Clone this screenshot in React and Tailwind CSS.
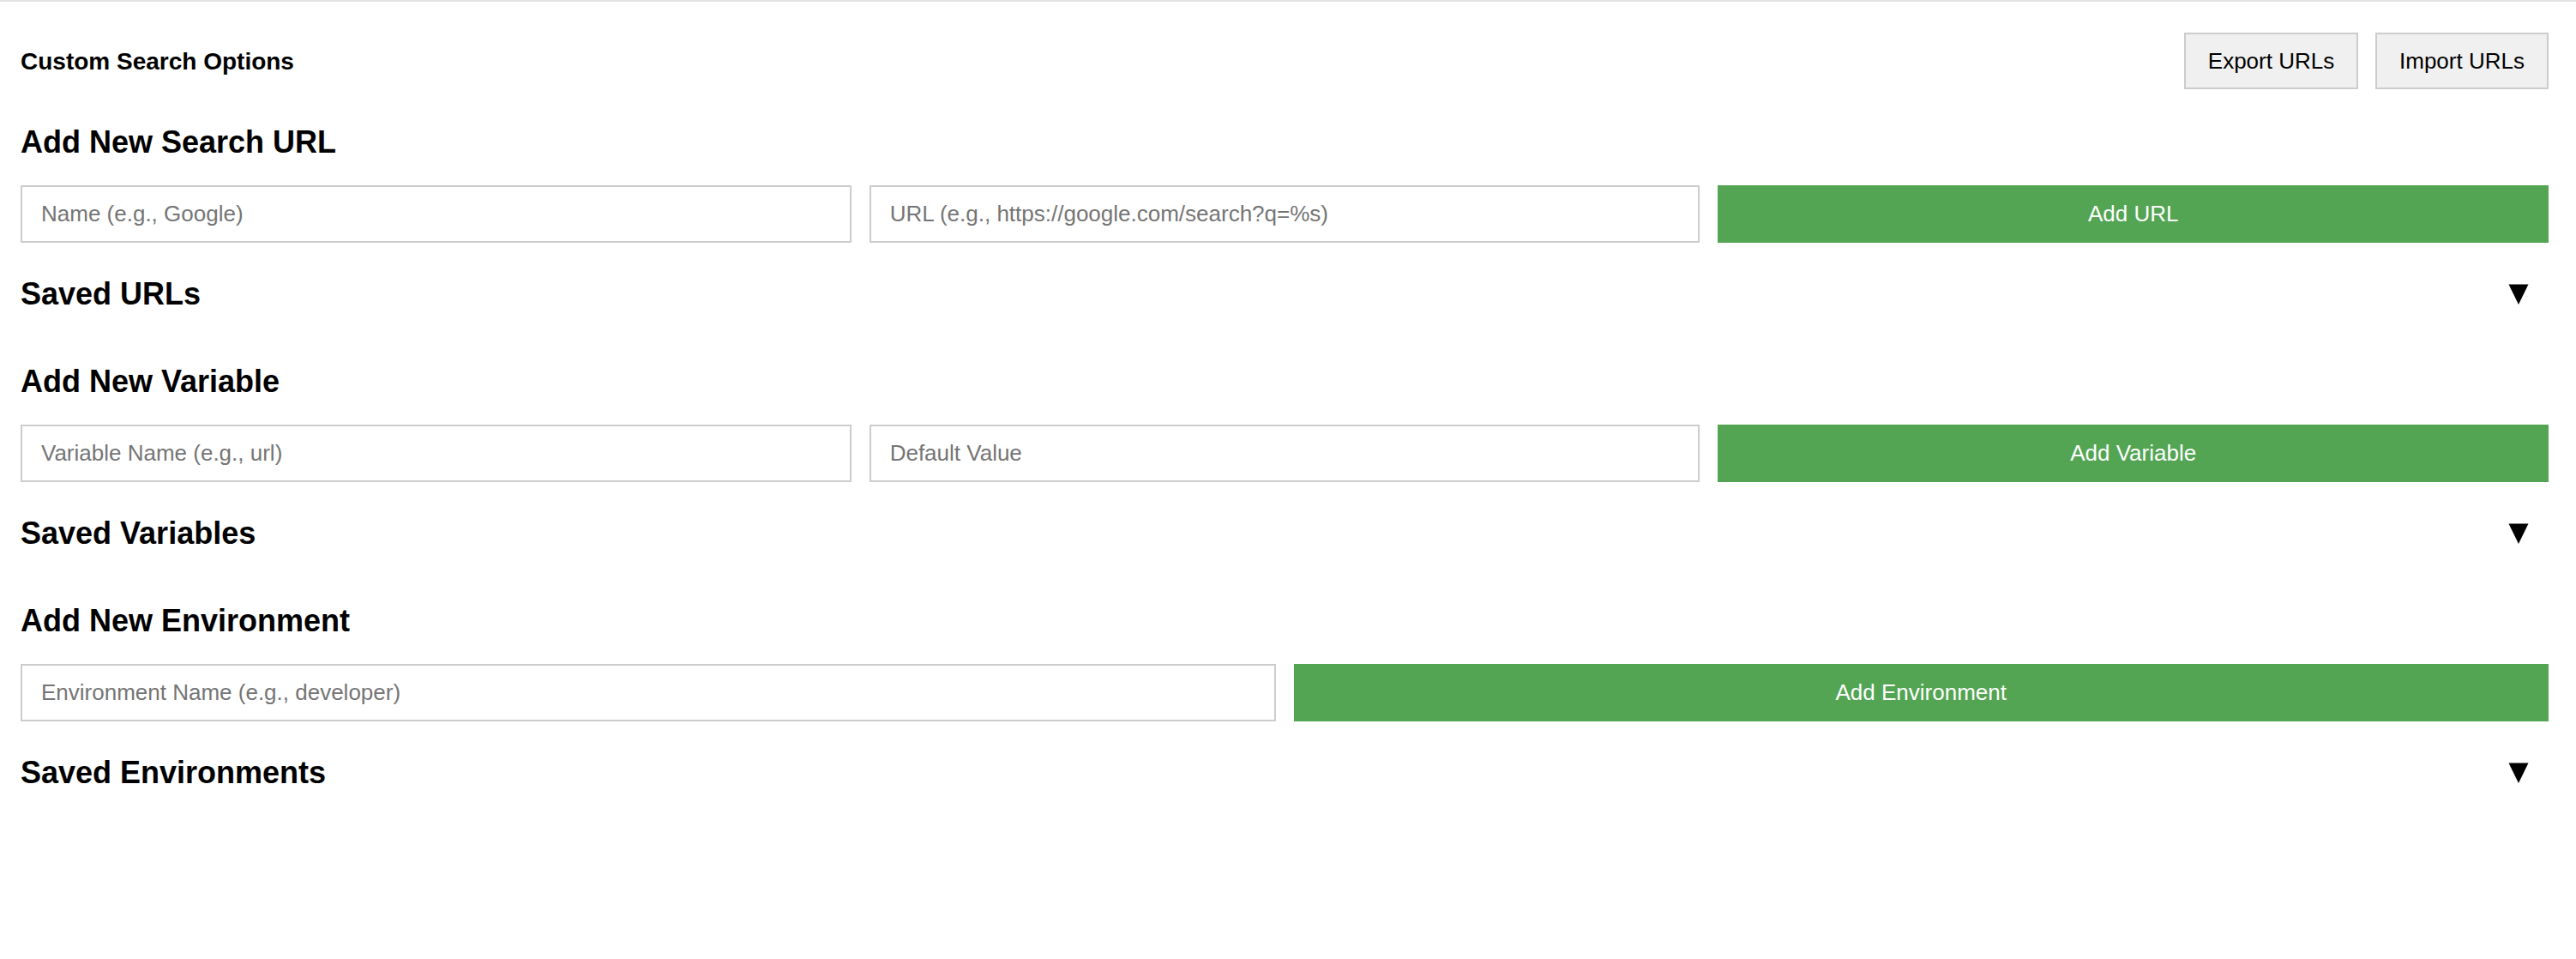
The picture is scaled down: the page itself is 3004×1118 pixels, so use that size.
function Triangle() {
  return (
    <svg width="24" height="24" viewBox="0 0 24 24" className="mr-[23px] shrink-0" aria-hidden="true">
      <polygon points="0.5,0.5 23.5,0.5 12,24" fill="#000000" />
    </svg>
  );
}

function Section({ title, savedTitle, inputs, buttonLabel, first }) {
  return (
    <section>
      <h2
        className={
          first
            ? "mt-[42px] text-[36px] font-bold leading-[40px]"
            : "mt-[62px] text-[36px] font-bold leading-[40px]"
        }
      >
        {title}
      </h2>
      <div
        className={
          inputs.length === 2
            ? "mt-[30px] grid grid-cols-3 gap-[21px]"
            : "mt-[30px] grid grid-cols-2 gap-[21px]"
        }
      >
        {inputs.map((p) => (
          <input
            key={p}
            type="text"
            placeholder={p}
            className="h-[67px] w-full min-w-0 border-2 border-[#cccccc] bg-white px-[22px] text-[26px] text-black outline-none placeholder:text-[#757575]"
          />
        ))}
        <button
          type="button"
          className="h-[67px] w-full min-w-0 bg-[#53a553] text-[26px] text-white"
        >
          {buttonLabel}
        </button>
      </div>
      <div className="mt-[40px] flex items-center justify-between">
        <h2 className="text-[36px] font-bold leading-[40px]">{savedTitle}</h2>
        <Triangle />
      </div>
    </section>
  );
}

export default function App() {
  return (
    <div className="min-h-screen border-t-2 border-[#e3e3e3] bg-white pl-[24px] pr-[32px] pt-[36px] font-['Liberation_Sans',Arial,Helvetica,sans-serif] text-black">
      <header className="flex h-[66px] items-center justify-between">
        <h1 className="pt-[1px] text-[28px] font-bold leading-[32px]">Custom Search Options</h1>
        <div className="flex gap-[20px]">
          <button
            type="button"
            className="h-[66px] w-[203px] border-2 border-[#cccccc] bg-[#f0f0f0] text-[26px] text-black"
          >
            Export URLs
          </button>
          <button
            type="button"
            className="h-[66px] w-[202px] border-2 border-[#cccccc] bg-[#f0f0f0] text-[26px] text-black"
          >
            Import URLs
          </button>
        </div>
      </header>

      <Section
        first
        title="Add New Search URL"
        savedTitle="Saved URLs"
        inputs={["Name (e.g., Google)", "URL (e.g., https://google.com/search?q=%s)"]}
        buttonLabel="Add URL"
      />
      <Section
        title="Add New Variable"
        savedTitle="Saved Variables"
        inputs={["Variable Name (e.g., url)", "Default Value"]}
        buttonLabel="Add Variable"
      />
      <Section
        title="Add New Environment"
        savedTitle="Saved Environments"
        inputs={["Environment Name (e.g., developer)"]}
        buttonLabel="Add Environment"
      />
    </div>
  );
}
